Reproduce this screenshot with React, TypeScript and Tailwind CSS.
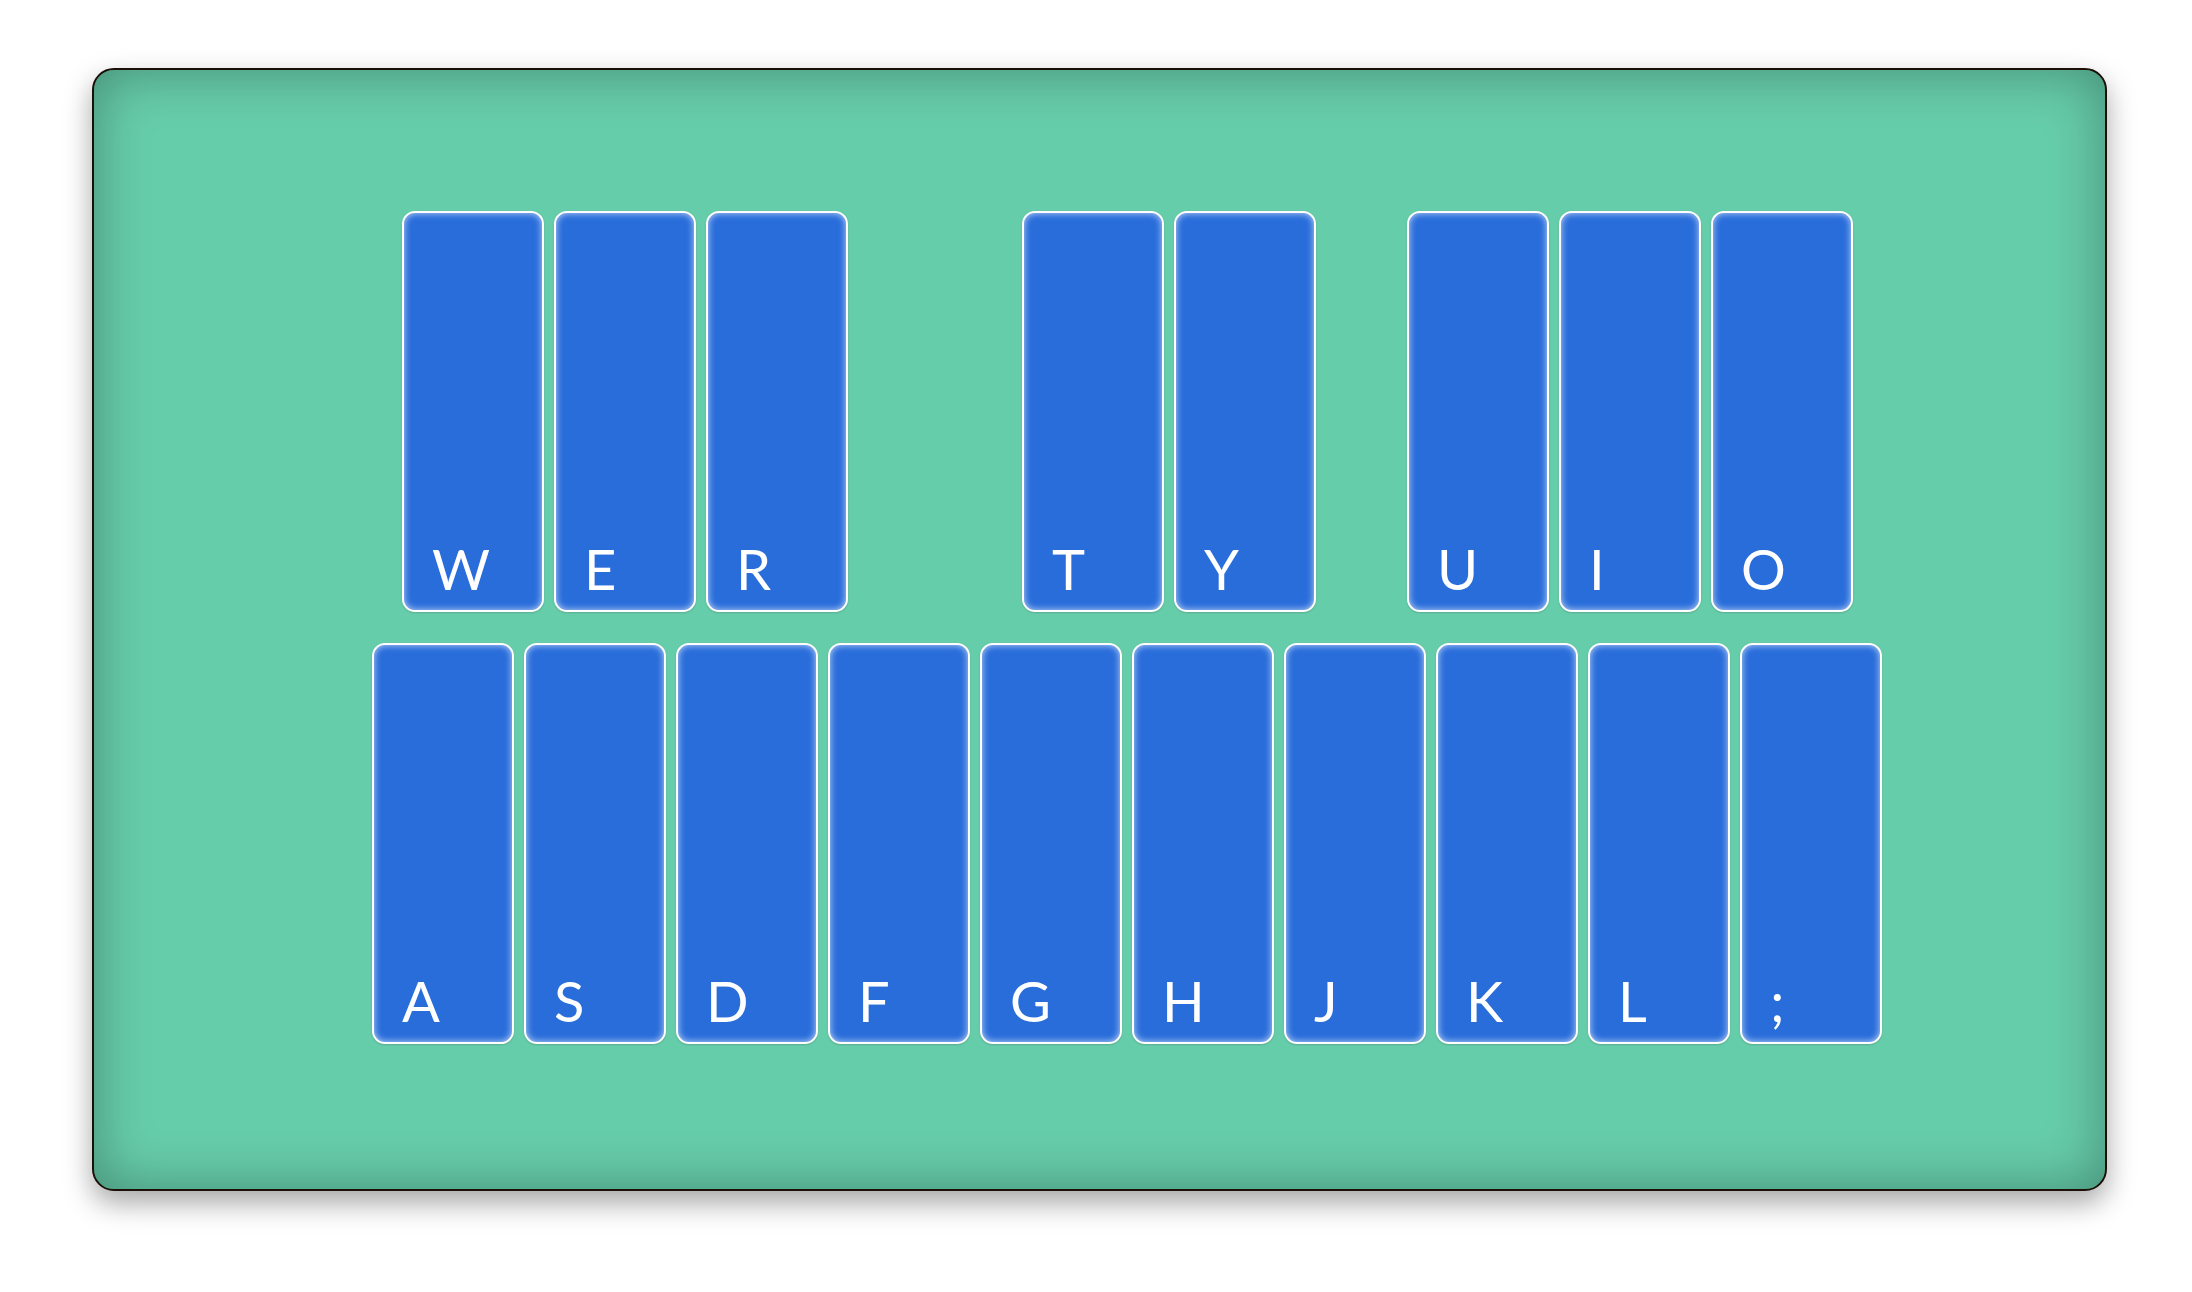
const topRow = [
  { key: 'W', gap: '' },
  { key: 'E', gap: '' },
  { key: 'R', gap: '' },
  { key: 'T', gap: 'ml-[164px]' },
  { key: 'Y', gap: '' },
  { key: 'U', gap: 'ml-[81px]' },
  { key: 'I', gap: '' },
  { key: 'O', gap: '' },
]

const homeRow = ['A', 'S', 'D', 'F', 'G', 'H', 'J', 'K', 'L', ';']

function Key({ label, className = '' }: { label: string; className?: string }) {
  return (
    <div
      className={`flex h-[401px] w-[142px] shrink-0 items-end rounded-[13px] border-2 border-white bg-[#296ddb] pb-2 pl-[28px] text-[56px] leading-[1.2] text-white shadow-[inset_0_0_7px_rgba(255,255,255,0.75),0_1px_2px_rgba(0,0,0,0.15)] ${className}`}
    >
      {label}
    </div>
  )
}

export default function App() {
  return (
    <div
      className="min-h-screen bg-white pl-[92px] pt-[68px]"
      style={{ fontFamily: "Lato, 'Open Sans', sans-serif" }}
    >
      <div className="h-[1123px] w-[2015px] rounded-[22px] border-2 border-[#1c0f08] bg-[#66cdaa] pl-[278px] pt-[141px] shadow-[inset_0_0_55px_rgba(0,0,0,0.32),0_12px_28px_rgba(0,0,0,0.35)]">
        <div className="flex flex-col gap-[31px]">
          {/* top row */}
          <div className="flex gap-[10px] pl-[30px]">
            {topRow.map((k) => (
              <Key key={k.key} label={k.key} className={k.gap} />
            ))}
          </div>

          {/* home row */}
          <div className="flex gap-[10px]">
            {homeRow.map((k) => (
              <Key key={k} label={k} />
            ))}
          </div>
        </div>
      </div>
    </div>
  )
}
